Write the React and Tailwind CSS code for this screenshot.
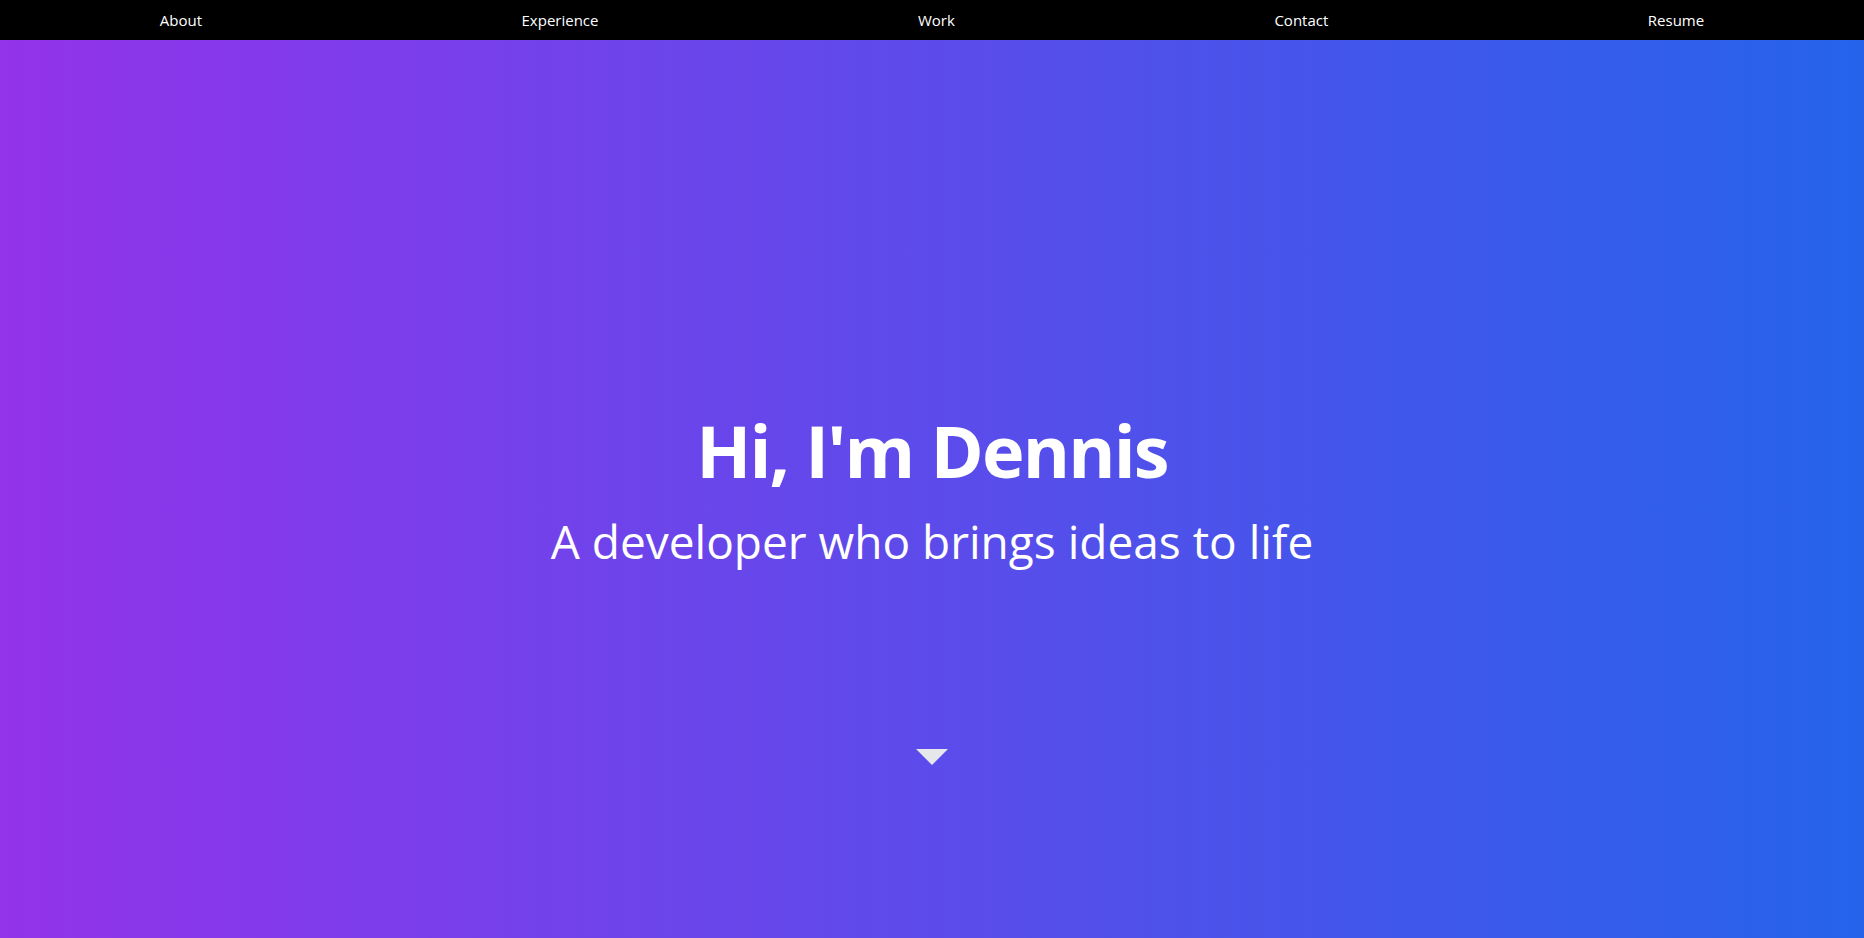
import React from 'react';

const links = ['About', 'Experience', 'Work', 'Contact', 'Resume'];

const App = () => {
  return (
    <div className="min-h-screen font-['Open_Sans',sans-serif] text-white">
      {/* Nav */}
      <nav className="fixed top-0 inset-x-0 z-10 h-10 bg-black flex items-center justify-around">
        {links.map((link) => (
          <a key={link} href={`#${link.toLowerCase()}`} className="text-[15px] text-white">
            {link}
          </a>
        ))}
      </nav>

      {/* Hero */}
      <section className="relative h-screen bg-[linear-gradient(to_right,#9333ea,#2563eb)] flex flex-col items-center justify-center pt-10">
        <h1 className="text-[72px] leading-none font-bold tracking-tight">Hi, I'm Dennis</h1>
        <p className="mt-[32px] text-[46px] leading-none">A developer who brings ideas to life</p>
        <div className="absolute bottom-[173px] left-1/2 -translate-x-1/2 w-0 h-0 border-l-[16px] border-r-[16px] border-t-[16px] border-l-transparent border-r-transparent border-t-[#e5e7eb]" />
      </section>
    </div>
  );
};

export default App;
